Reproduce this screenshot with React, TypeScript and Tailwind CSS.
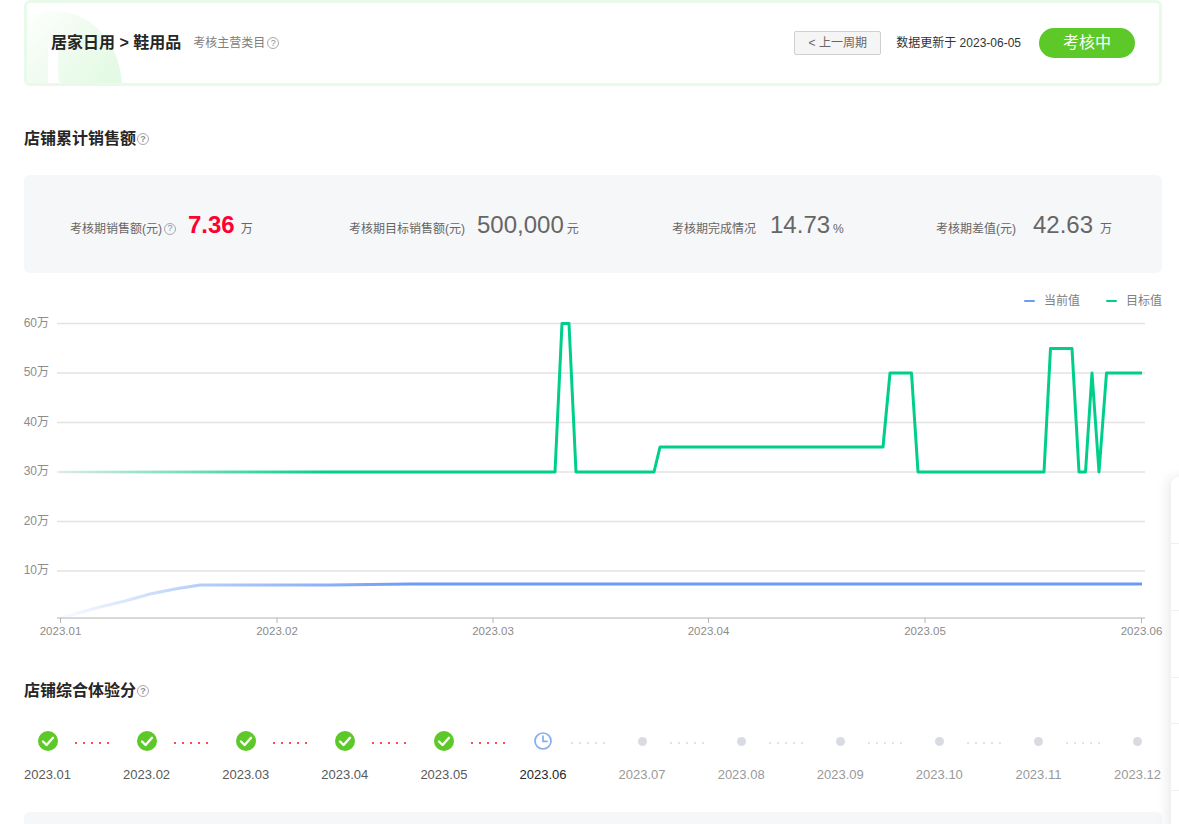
const SANS = "font-['Liberation_Sans','Noto_Sans_CJK_SC',sans-serif]";

function Help({ className = "" }: { className?: string }) {
  return (
    <span className={`inline-flex h-[12px] w-[12px] shrink-0 items-center justify-center rounded-full border border-[#a8a8a8] text-[9px] leading-none text-[#8c8c8c] ${className}`}>
      ?
    </span>
  );
}

function Stat({ label, value, unit, help, red, className, gap, unitGap }: { label: string; value: string; unit: string; help?: boolean; red?: boolean; className: string; gap: string; unitGap: string }) {
  return (
    <div className={`flex items-center ${className}`}>
      <span className="mt-[7px] text-[12px] text-[#666666]">{label}</span>
      {help && <Help className="ml-[2px] mt-[7px]" />}
      <span className={`${gap} text-[24px] leading-none ${red ? "font-bold text-[#ff0033]" : "text-[#666666]"}`}>{value}</span>
      <span className={`${unitGap} mt-[8px] text-[12px] text-[#666666]`}>{unit}</span>
    </div>
  );
}

function Chart() {
  const green = "60,472 555,472 562,323.5 569,323.5 576,472 654,472 660,447 883,447 890,373 911.5,373 918,472 1044,472 1050.5,348.5 1072,348.5 1079,472 1085.5,472 1092,373 1099,472 1106.5,373 1142,373";
  const blue = "60,618 100,607 125,601 150,594 175,589 200,585 330,585 410,584 1142,584";
  const grid = [
    ["60万", 323.5],
    ["50万", 373],
    ["40万", 422.5],
    ["30万", 472],
    ["20万", 521.5],
    ["10万", 571],
  ] as const;
  const ticks = [
    ["2023.01", 60.5],
    ["2023.02", 277],
    ["2023.03", 493],
    ["2023.04", 708.5],
    ["2023.05", 925],
    ["2023.06", 1141.5],
  ] as const;
  return (
    <svg width="1179" height="350" viewBox="0 300 1179 350" className="-ml-[24px] block">
      <defs>
        <linearGradient id="g" gradientUnits="userSpaceOnUse" x1="60" y1="0" x2="1142" y2="0">
          <stop offset="0" stopColor="#00ce8b" stopOpacity="0.05" />
          <stop offset="0.25" stopColor="#00ce8b" />
          <stop offset="1" stopColor="#00ce8b" />
        </linearGradient>
        <linearGradient id="b" gradientUnits="userSpaceOnUse" x1="60" y1="0" x2="1142" y2="0">
          <stop offset="0" stopColor="#6b9bf7" stopOpacity="0.03" />
          <stop offset="0.13" stopColor="#6b9bf7" stopOpacity="0.5" />
          <stop offset="0.33" stopColor="#6b9bf7" />
          <stop offset="1" stopColor="#6b9bf7" />
        </linearGradient>
      </defs>
      {grid.map(([t, y]) => (
        <g key={t}>
          <line x1="57" x2="1145" y1={y} y2={y} stroke="#e3e3e3" strokeWidth="1.4" />
          <text x="49" y={y + 3} textAnchor="end" fontSize="12" fill="#8c8c8c" fontFamily="'Liberation Sans','Noto Sans CJK SC',sans-serif">{t}</text>
        </g>
      ))}
      <line x1="57" x2="1145" y1="618" y2="618" stroke="#d9d9d9" strokeWidth="1.8" />
      {ticks.map(([t, x]) => (
        <g key={t}>
          <line x1={x} x2={x} y1="618" y2="623" stroke="#b5b5b5" />
          <text x={x} y="635" textAnchor="middle" fontSize="11.5" fill="#8c8c8c" fontFamily="'Liberation Sans','Noto Sans CJK SC',sans-serif">{t}</text>
        </g>
      ))}
      <polyline points={blue} fill="none" stroke="url(#b)" strokeWidth="3" strokeLinejoin="round" />
      <polyline points={green} fill="none" stroke="url(#g)" strokeWidth="3" strokeLinejoin="round" />
    </svg>
  );
}

function Check() {
  return (
    <svg width="20" height="20" viewBox="0 0 20 20" className="block">
      <circle cx="10" cy="10" r="10" fill="#5cc928" />
      <path d="M5 10.5 L8.6 14 L15 6.8" fill="none" stroke="#ffffff" strokeWidth="2.4" strokeLinecap="round" strokeLinejoin="round" />
    </svg>
  );
}

function Clock() {
  return (
    <svg width="20" height="20" viewBox="0 0 20 20" className="block">
      <circle cx="10" cy="10" r="8" fill="none" stroke="#85aeee" strokeWidth="1.7" />
      <path d="M10 5 V10.4 H14" fill="none" stroke="#85aeee" strokeWidth="1.7" strokeLinecap="round" />
    </svg>
  );
}

const months = ["01", "02", "03", "04", "05", "06", "07", "08", "09", "10", "11", "12"];

function Steps() {
  return (
    <div className="mr-[1px] mt-[29px] flex items-start">
      {months.map((m, i) => (
        <div key={m} className={`flex items-start ${i < 11 ? "flex-1" : ""}`}>
          <div className="flex w-[47px] shrink-0 flex-col items-center">
            <div className="flex h-[20px] w-[20px] items-center justify-center">
              {i < 5 ? <Check /> : i === 5 ? <Clock /> : <span className="h-[9px] w-[9px] rounded-full bg-[#d8dbe1]" />}
            </div>
            <span className={`mt-[14px] whitespace-nowrap text-[13px] leading-[20px] ${i < 5 ? "text-[#595959]" : i === 5 ? "text-[#262626]" : "text-[#999999]"}`}>
              2023.{m}
            </span>
          </div>
          {i < 11 && (
            <div className="mt-[11px] flex flex-1 items-center justify-center gap-[6px] pr-[10px]">
              {[0, 1, 2, 3, 4].map((d) => (
                <span key={d} className={`h-[2px] w-[2px] ${i < 5 ? "bg-[#ff4d4f]" : "bg-[#e3e3e3]"}`} />
              ))}
            </div>
          )}
        </div>
      ))}
    </div>
  );
}

export default function App() {
  return (
    <div className={`relative h-[824px] w-[1179px] overflow-hidden bg-white pl-[24px] pr-[17px] ${SANS}`}>
      <header className="relative flex h-[86px] items-center overflow-hidden rounded-[6px] border-[3px] border-[#e9f9ea] pl-[24px] pr-[24px]">
        <svg width="96" height="72" viewBox="0 0 96 72" className="absolute bottom-0 left-0">
          <defs>
            <linearGradient id="dome" x1="0" y1="0" x2="1" y2="0.7">
              <stop offset="0" stopColor="#feffFe" />
              <stop offset="0.4" stopColor="#f3fcf3" />
              <stop offset="1" stopColor="#e4fae4" />
            </linearGradient>
            <linearGradient id="bar" x1="0" y1="0" x2="0" y2="1">
              <stop offset="0" stopColor="#ffffff" stopOpacity="0" />
              <stop offset="0.3" stopColor="#ffffff" />
              <stop offset="1" stopColor="#ffffff" />
            </linearGradient>
          </defs>
          <path d="M0 6 C8 2 16 0 26 0 C62 0 92 28 95 72 L36 72 C33 72 31 70 31 66 L31 72 L0 72 Z" fill="url(#dome)" />
          <rect x="21" y="28" width="10" height="44" fill="url(#bar)" />
        </svg>
        <h1 className="relative text-[16px] font-bold text-[#262626]">居家日用 &gt; 鞋用品</h1>
        <span className="relative ml-[12px] text-[12px] text-[#808080]">考核主营类目</span>
        <Help className="relative ml-[2px]" />
        <button className="ml-auto h-[24px] w-[87px] rounded-[2px] border border-[#cfcfcf] bg-[#f5f5f5] text-[12px] text-[#666666]">
          &lt; 上一周期
        </button>
        <span className="ml-[15px] text-[12px] text-[#333333]">数据更新于 2023-06-05</span>
        <span className="ml-[18px] flex h-[30px] w-[96px] items-center justify-center rounded-full bg-[#5cc928] text-[16px] text-white">
          考核中
        </span>
      </header>

      <h2 className="mt-[42px] flex h-[22px] items-center text-[16px] font-bold text-[#262626]">
        店铺累计销售额<Help className="ml-[1px]" />
      </h2>

      <section className="relative mt-[25px] flex h-[98px] items-center rounded-[6px] bg-[#f6f7f9] pl-[46px] pt-[2px]">
        <Stat label="考核期销售额(元)" value="7.36" unit="万" help red className="w-[279px]" gap="ml-[12px]" unitGap="ml-[6px]" />
        <Stat label="考核期目标销售额(元)" value="500,000" unit="元" className="w-[323px]" gap="ml-[12px]" unitGap="ml-[3px]" />
        <Stat label="考核期完成情况" value="14.73" unit="%" className="w-[264px]" gap="ml-[14px]" unitGap="ml-[3px]" />
        <Stat label="考核期差值(元)" value="42.63" unit="万" className="" gap="ml-[17px]" unitGap="ml-[7px]" />
      </section>

      <div className="relative">
        <div className="absolute right-0 top-[19px] flex items-center text-[12px] text-[#808080]">
          <span className="mr-[9px] h-[2px] w-[11px] rounded-full bg-[#6b9bf7]" />
          当前值
          <span className="ml-[26px] mr-[9px] h-[2px] w-[11px] rounded-full bg-[#00ce8b]" />
          目标值
        </div>
        <div className="h-[27px]" />
        <Chart />
      </div>

      <h2 className="mt-[30px] flex h-[22px] items-center text-[16px] font-bold text-[#262626]">
        店铺综合体验分<Help className="ml-[1px]" />
      </h2>

      <Steps />

      <div className="mt-[27px] h-[40px] rounded-[6px] bg-[#f6f7f9]" />

      <aside className="absolute left-[1171px] top-[477px] flex h-[400px] w-[60px] flex-col rounded-tl-[8px] bg-white shadow-[-4px_0_12px_rgba(0,0,0,0.08)]">
        <div className="h-[67px] border-b border-[#f0f0f0]" />
        <div className="h-[67px] border-b border-[#f0f0f0]" />
        <div className="h-[67px] border-b border-[#f0f0f0]" />
        <div className="h-[46px] border-b border-[#f0f0f0]" />
        <div className="h-[67px] border-b border-[#f0f0f0]" />
      </aside>
    </div>
  );
}
